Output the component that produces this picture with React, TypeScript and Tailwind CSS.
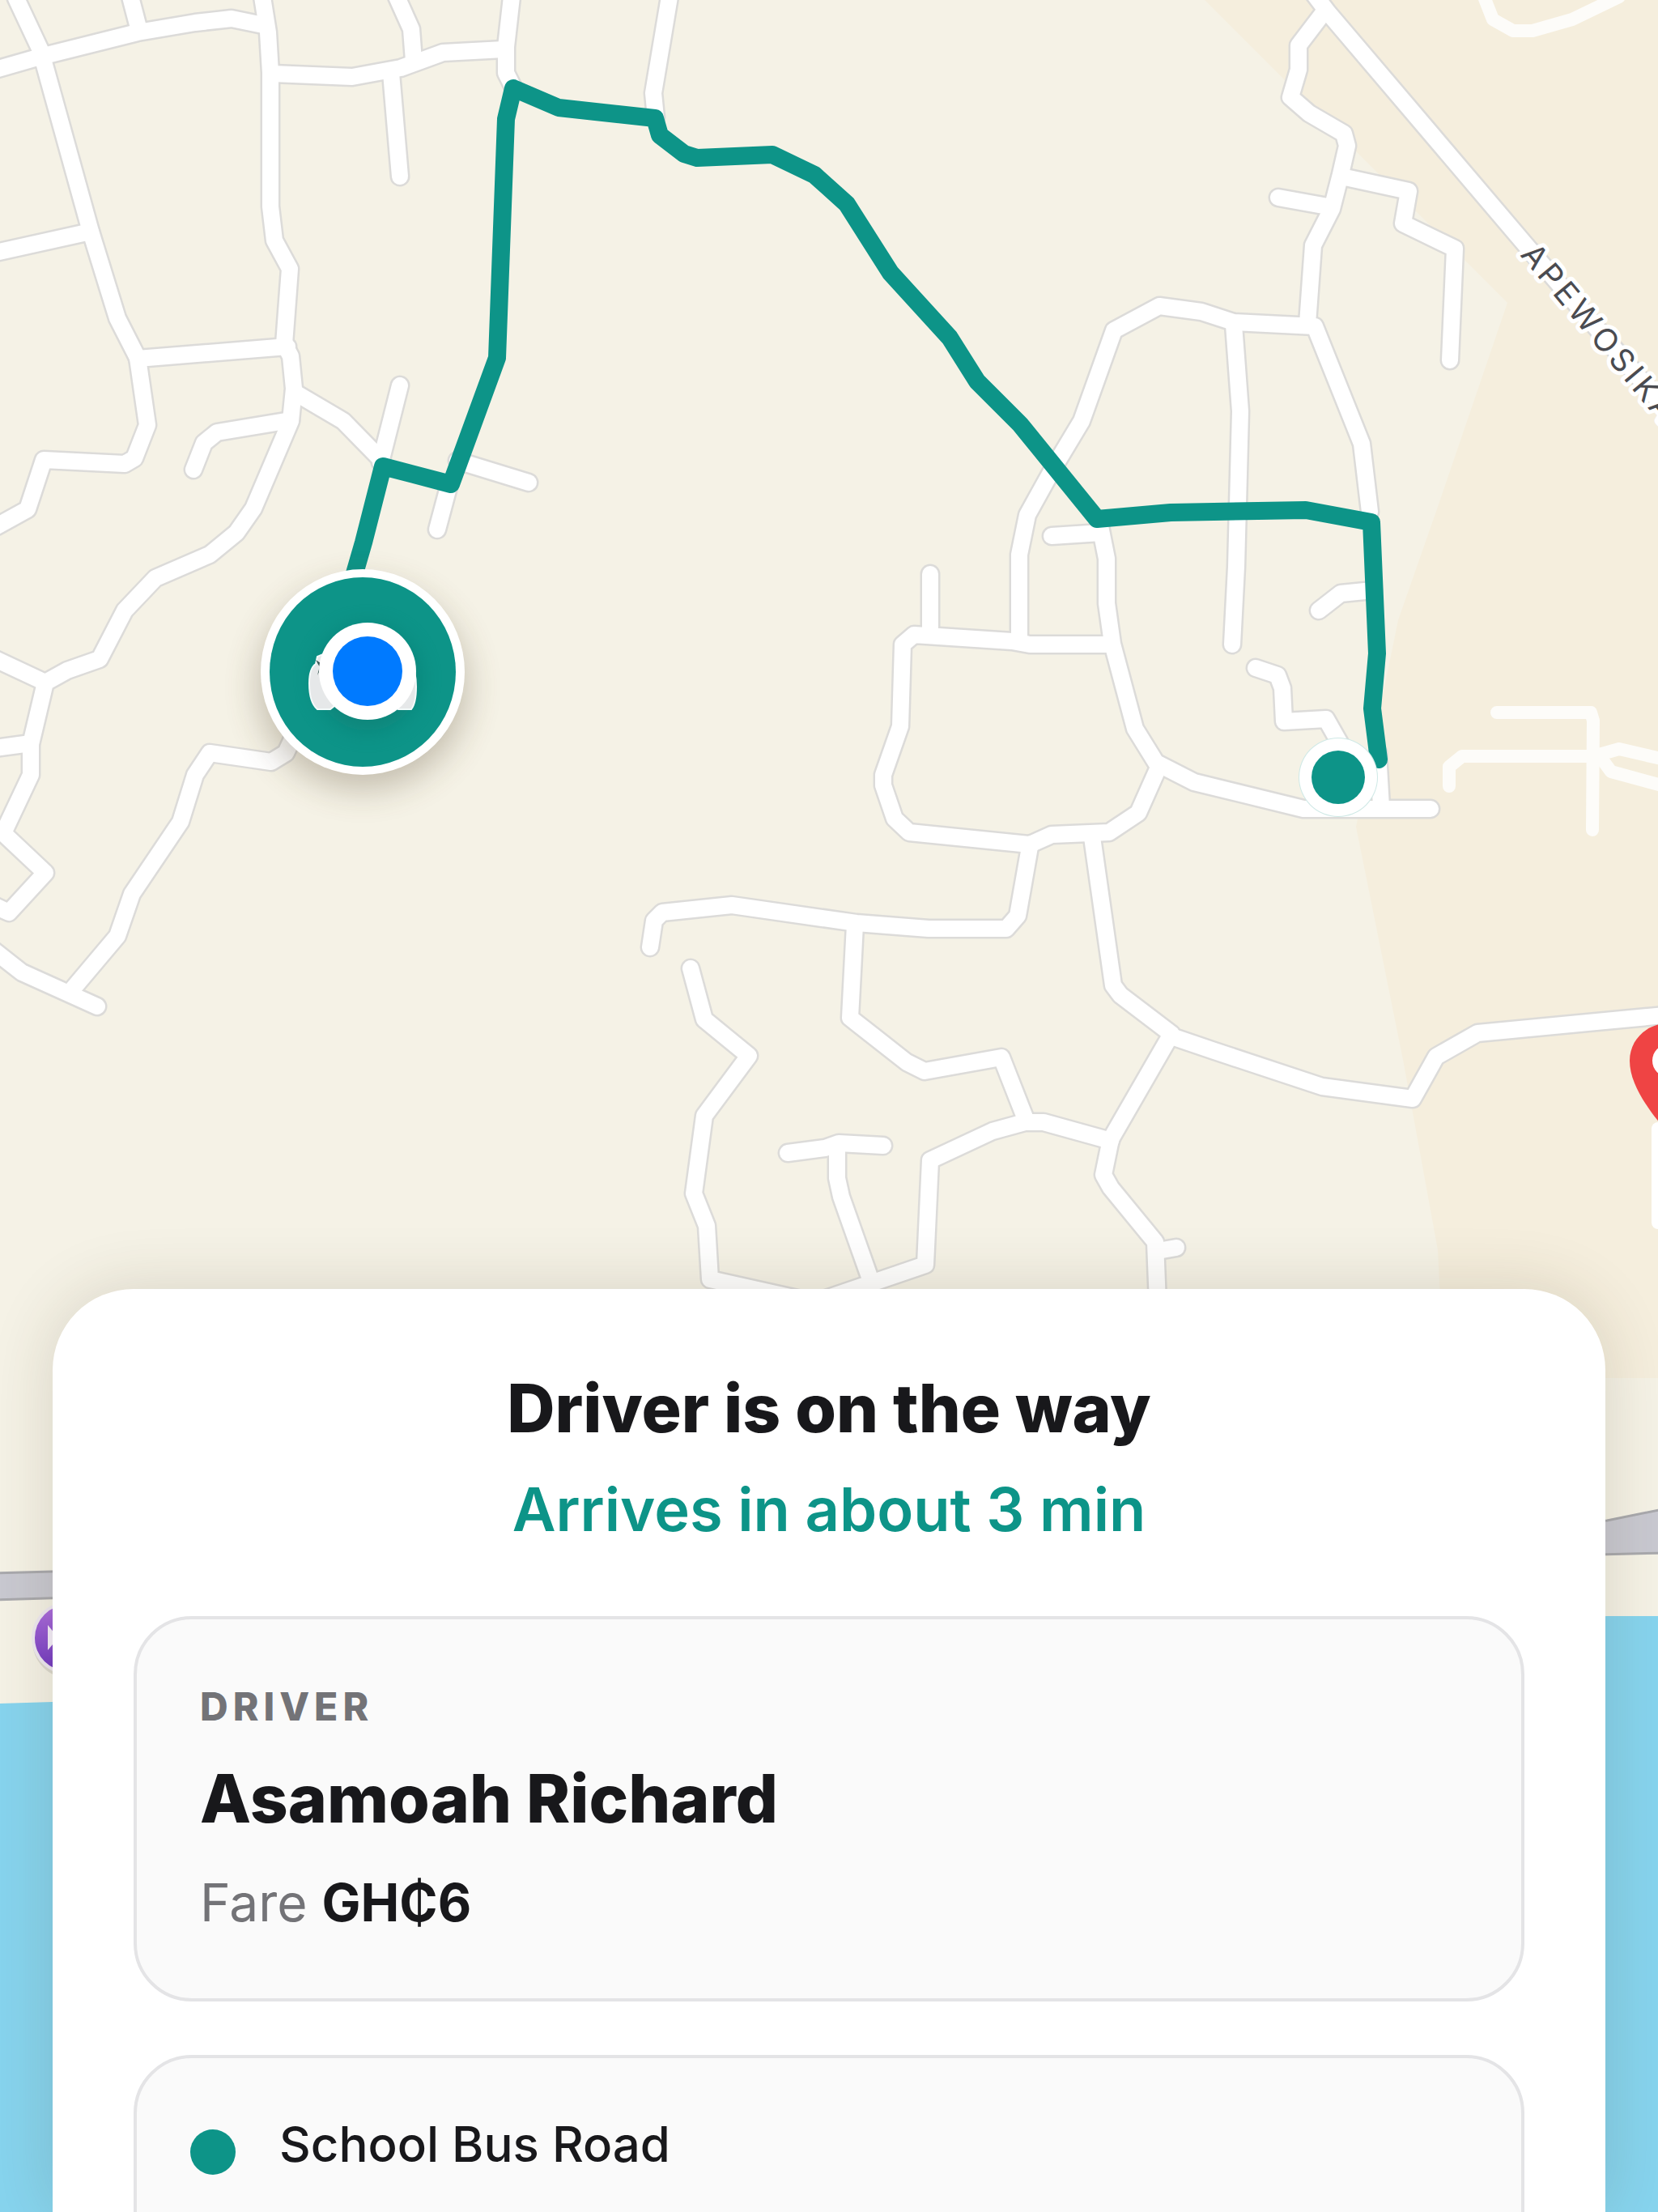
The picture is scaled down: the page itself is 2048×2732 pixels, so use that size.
import React from "react";

const ROADS = [
  "20,-2 50,62 112,286 145,393 170,442 182,525 166,566 154,573 54,568 34,629 -4,650",
  "-6,86 50,70 170,40 241,28 286,23 325,31",
  "161,-4 172,38",
  "324,-4 331,40 334,90 334,255 339,297 358,332 351,425 359,440 363,480 359,520 313,628 292,658 259,685 192,714 154,754 123,814 83,828 56,843 38,919 38,957 4,1029 56,1078 11,1127 -6,1119",
  "-6,814 56,843",
  "-6,924 38,918",
  "-6,1175 27,1201 120,1243",
  "86,1226 145,1156 163,1104 223,1015 241,957 259,930 335,941 353,930 360,915",
  "-6,312 112,286",
  "170,443 355,428",
  "239,580 252,547 268,534 359,519",
  "363,484 424,520 470,567",
  "494,476 470,571",
  "653,596 565,569",
  "540,654 555,598",
  "337,91 435,95 495,84 547,65 622,61",
  "483,90 494,218",
  "490,-4 508,36 511,75",
  "632,-4 625,58 625,90 634,108",
  "827,-4 807,115 810,145",
  "1618,-14 1640,15 1884,302 2056,503",
  "1636,14 1604,56 1604,86 1594,120 1617,140 1660,165 1664,180 1656,215 1645,258 1622,303 1615,400",
  "1579,244 1640,255",
  "1657,218 1740,236 1733,276 1797,307 1791,445",
  "1259,788 1259,685 1269,636 1300,580 1336,520 1376,408 1432,378 1484,385 1524,398 1624,403 1682,548 1692,632",
  "1524,401 1532,508 1527,700 1522,796",
  "1299,662 1360,658",
  "1358,645 1367,690 1367,745 1374,795 1402,900 1428,942 1475,966 1610,999 1767,999",
  "1149,709 1149,784",
  "1371,796 1272,796 1250,792 1129,784 1115,796 1112,897 1091,957 1091,970 1105,1011 1123,1028 1272,1043 1299,1031 1370,1028 1406,1004 1430,950",
  "1629,754 1656,733 1696,729",
  "1551,825 1578,834 1584,850 1586,891 1638,888 1655,918",
  "1702,930 1706,996",
  "1272,1046 1257,1131 1243,1147 1147,1147 1058,1140 904,1118 818,1127 808,1137 803,1170",
  "1056,1142 1050,1257 1120,1312 1142,1323 1237,1306 1266,1380",
  "853,1196 870,1259 925,1304 870,1378 857,1474 873,1514 877,1580 985,1604",
  "1020,1604 1143,1562 1149,1433 1226,1397 1266,1386 1289,1386 1372,1409",
  "1349,1034 1375,1217 1384,1229 1447,1277 1372,1407 1363,1451 1372,1467 1427,1534 1430,1610",
  "1430,1545 1453,1541",
  "1447,1280 1500,1298 1633,1342 1745,1357 1774,1305 1825,1276 2056,1254",
  "973,1424 1019,1418 1036,1412 1091,1415",
  "1034,1419 1034,1455 1039,1478 1074,1577",
];

const PATHS = [
  "1849,880 1965,880 1968,890 1967,1025",
  "1790,971 1790,947 1806,934 1968,934 2000,925 2056,938",
  "1979,938 1990,953 2056,971",
  "1833,-4 1844,24 1869,38 1893,38 1942,24 2000,-4",
];

const ROUTE =
  "436,715 449,670 473,576 557,598 614,442 625,147 634,109 690,133 809,146 815,167 845,190 861,195 954,191 1006,216 1046,252 1100,337 1173,417 1207,471 1260,524 1355,641 1446,633 1613,630 1694,645 1701,807 1695,875 1703,938";

function MapView() {
  return (
    <svg
      className="absolute inset-0 h-full w-full"
      viewBox="0 0 2048 2732"
      preserveAspectRatio="xMidYMin slice"
      role="img"
      aria-label="Map showing the driver's route"
    >
      <defs>
        <filter id="soft" x="-50%" y="-50%" width="200%" height="200%">
          <feGaussianBlur stdDeviation="22" />
        </filter>
        <filter id="inner" x="-50%" y="-50%" width="200%" height="200%">
          <feGaussianBlur stdDeviation="14" />
        </filter>
        <linearGradient id="poi" x1="0" y1="0" x2="0" y2="1">
          <stop offset="0" stopColor="#b070e0" />
          <stop offset="1" stopColor="#7038c0" />
        </linearGradient>
      </defs>

      <rect width="2048" height="2732" fill="#f5f2e6" />
      <path d="M1488 0 1573 85 1862 374 1777 623 1727 766 1675 1021 1734 1314 1776 1544 1784 1702H2048V0Z" fill="#f5eedd" />

      <g fill="none" strokeLinejoin="round" strokeLinecap="round">
        <g stroke="#fdfcf9" strokeWidth="16">
          {PATHS.map((p) => (
            <polyline key={p} points={p} />
          ))}
        </g>
        <g stroke="#dcdbd9" strokeWidth="25">
          {ROADS.map((p) => (
            <polyline key={p} points={p} />
          ))}
        </g>
        <g stroke="#ffffff" strokeWidth="20">
          {ROADS.map((p) => (
            <polyline key={p} points={p} />
          ))}
        </g>
      </g>

      <text
        transform="translate(1877 315) rotate(50)"
        fontFamily="Inter, sans-serif"
        fontSize="39"
        fontWeight="400"
        fill="#4a4b50"
        stroke="#ffffff"
        strokeWidth="10"
        strokeLinejoin="round"
        paintOrder="stroke"
        className="tracking-[5px]"
      >
        APEWOSIKA
      </text>

      {/* Coastal highway and sea */}
      <path d="M-6 1943 1000 1915 1985 1878 2054 1864V1918L1000 1945-6 1976Z" fill="#c9c9d1" stroke="#a9a9ad" strokeWidth="3" />
      <path d="M0 2104 65 2102 1985 1996H2048V2732H0Z" fill="#87d4ee" />

      <circle cx="86" cy="2027" r="46" fill="#000" opacity=".1" />
      <circle cx="84" cy="2023" r="45" fill="#efe9f2" />
      <circle cx="84" cy="2023" r="41" fill="url(#poi)" />
      <path d="M59 2007 72 2023 59 2038Z" fill="#f6effb" />

      {/* Destination pin with its label */}
      <rect x="2040" y="1386" width="60" height="132" rx="8" fill="#ffffff" />
      <path
        d="M2061 1264c-27 0-48 20-48 46 0 30 24 62 48 90 24-28 48-60 48-90 0-26-21-46-48-46Z"
        fill="#ef4444"
      />
      <circle cx="2061" cy="1310" r="20" fill="#ffffff" />

      <polyline points={ROUTE} fill="none" stroke="#0d9488" strokeWidth="22" strokeLinejoin="round" strokeLinecap="round" />

      <circle cx="1653" cy="960" r="49" fill="#cfe9e6" />
      <circle cx="1653" cy="960" r="48" fill="#ffffff" />
      <circle cx="1653" cy="960" r="33" fill="#0d9488" />

      {/* Car marker under the current position dot */}
      <ellipse cx="448" cy="848" rx="128" ry="126" fill="#4a3a20" opacity=".3" filter="url(#soft)" />
      <ellipse cx="448" cy="830" rx="126" ry="127" fill="#ffffff" />
      <ellipse cx="448" cy="830" rx="115" ry="117" fill="#0d9488" />
      <circle cx="454" cy="838" r="64" fill="#0b6f66" opacity=".45" filter="url(#inner)" />
      <path d="M390 820 392 811 404 806 504 808C512 822 514 836 514 848 514 864 512 871 508 876H492L480 868H418L408 876H392C385 870 382 858 382 844 382 832 384 824 390 820Z" fill="#e6e8e9" stroke="#f4fafa" strokeWidth="2" />
      <path d="M390 815 396 819 392 834 396 826Z" fill="#3a5a56" />
      <circle cx="454" cy="829" r="60" fill="#ffffff" />
      <circle cx="454" cy="829" r="43" fill="#007aff" />
    </svg>
  );
}

function Card({ children, className = "" }: { children: React.ReactNode; className?: string }) {
  return (
    <section className={"rounded-[72px] border-4 border-[#e4e4e6] bg-[#fafafa] " + className}>{children}</section>
  );
}

export default function App() {
  return (
    <div className="relative flex h-screen flex-col overflow-hidden bg-[#f5f2e6] font-['Inter',sans-serif] text-[#18181b]">
      <MapView />
      <div className="flex-[1592]" />
      <main className="relative mx-[65px] min-h-0 flex-[1140] rounded-t-[100px] bg-white shadow-[0_0_80px_rgba(60,50,20,0.16)]">
        <div className="px-[100px] pt-[98px]">
          <header className="text-center">
            <h1 className="text-[82px] leading-[100px] font-extrabold">Driver is on the way</h1>
            <p className="mt-6 text-[74px] leading-[100px] font-semibold text-[#0d9488]">
              Arrives in about 3 min
            </p>
          </header>

          <div className="mt-[82px] flex flex-col gap-[66px]">
            <Card className="px-[78px] py-[78px]">
              <h2 className="text-[48px] leading-[60px] font-extrabold tracking-[6px] text-[#737377]">DRIVER</h2>
              <p className="mt-[34px] text-[82px] leading-[100px] font-extrabold">Asamoah Richard</p>
              <p className="mt-[38px] text-[64px] leading-[80px] text-[#737377]">
                Fare <strong className="font-bold text-[#18181b]">GH₵6</strong>
              </p>
            </Card>

            <Card className="px-[66px] pt-[66px] pb-[160px]">
              <div className="flex items-start gap-[54px]">
                <span className="mt-[22px] size-14 rounded-full bg-[#0d9488]" />
                <p className="text-[60px] leading-[80px] font-medium">School Bus Road</p>
              </div>
            </Card>
          </div>
        </div>
      </main>
    </div>
  );
}
